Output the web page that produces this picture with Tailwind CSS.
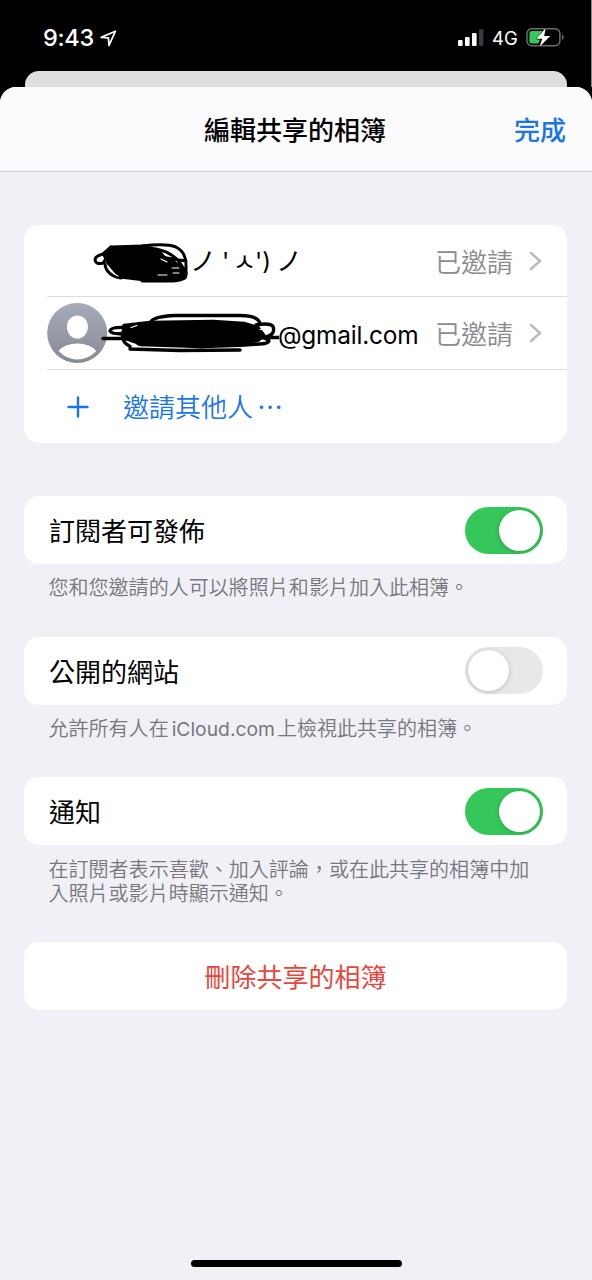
<!DOCTYPE html>
<html lang="zh-Hant">
<head>
<meta charset="utf-8">
<title>編輯共享的相簿</title>
<script src="https://cdn.jsdelivr.net/npm/@tailwindcss/browser@4"></script>
</head>
<body class="bg-black">
<div class="relative flex h-[1280px] w-[592px] flex-col overflow-hidden bg-black font-['Inter','Noto_Sans_CJK_TC',sans-serif]">
  <!-- status bar -->
  <div class="flex h-[71px] shrink-0 items-start justify-between border-r border-[#8a8a8a] pr-[27px] pl-[43px] text-white">
    <div class="flex items-center gap-[5px] pt-[23px]">
      <span class="w-[52px] text-[23.500px] leading-[30px] font-[550] tracking-[-0.300px]">9:43</span>
      <svg class="h-[17px] w-[17px]" viewBox="0 0 17 17" fill="none" stroke="#fff" stroke-width="1.700" stroke-linejoin="round"><path d="M1.200 7.400 15.400 1.200 9 15.400 8.400 7.800Z"/></svg>
    </div>
    <div class="flex items-center pt-[22px]">
      <svg class="h-[18px] w-[27px]" viewBox="0 0 27 18"><rect x="1" y="10.900" width="4.600" height="6" rx="1" fill="#fff"/><rect x="8" y="8.100" width="4.600" height="8.800" rx="1" fill="#fff"/><rect x="15" y="4.100" width="4.600" height="12.800" rx="1" fill="#fff"/><rect x="22" y="0.200" width="4.400" height="16.700" rx="1" fill="#3a3a3a"/></svg>
      <span class="ml-[8px] w-[26px] text-[18.500px] leading-[32px] font-normal">4G</span>
      <svg class="ml-[8px] h-[20px] w-[38px]" viewBox="0 0 38 20"><rect x="0.900" y="0.700" width="33" height="17" rx="5" fill="none" stroke="#6c6c6c" stroke-width="1.500"/><path d="M6 3.100h11L11 11.500h3l-1.500 4H6a2.600 2.600 0 0 1-2.600-2.600V5.700A2.600 2.600 0 0 1 6 3.100Z" fill="#35c759"/><path d="M36 6.500v5.600q1.700-.8 1.700-2.800T36 6.500Z" fill="#6c6c6c"/><path d="M19.800 0 10.400 10.700h5.800l-2.600 8L24.200 8h-6.100Z" fill="#fff" stroke="#000" stroke-width="0.800" paint-order="stroke"/></svg>
    </div>
  </div>
  <!-- sheet behind -->
  <div class="h-[16px] shrink-0 border-r border-[#8a8a8a] pr-[24px] pl-[25px]"><div class="h-full rounded-t-[14px] bg-[#dededf]"></div></div>
  <!-- active sheet -->
  <div class="flex flex-1 flex-col overflow-hidden rounded-t-[16px] bg-[#f1f0f6]">
    <header class="grid h-[85px] shrink-0 grid-cols-[1fr_auto_1fr] items-center border-b border-[#cfcfd4] bg-[#fbfbfe] pt-[3px] pr-[26px] pl-[24px]">
      <span></span>
      <h1 class="text-[26px] leading-[36px] font-medium text-black">編輯共享的相簿</h1>
      <span class="text-right text-[26px] leading-[36px] font-medium text-[#1a75e8]">完成</span>
    </header>

    <main class="flex flex-col pt-[52.500px] pr-[25px] pl-[24px]">
      <section class="flex h-[218px] flex-col rounded-[15px] bg-white pl-[23px]">
        <div class="flex h-[72.500px] items-center border-b border-[#dcdce0] pt-[2px] pr-[25px]">
          <svg class="ml-[43px] h-[50px] w-[100px] shrink-0" viewBox="90 237 100 50" fill="none" stroke="#000" stroke-width="3" stroke-linecap="round" stroke-linejoin="round"><path d="M111 248 144 247 158 251 164 258 176 268 178 272 186 274 185 279 170 281 145 281 120 278 108 264 104 256Z" fill="#000"/><path d="M111 248 103 255Q95 257 95 261Q96 266 103 264L107 258M105 265Q106 276 121 279M142 247Q166 244 176 248Q186 253 186 266V276Q185 282 170 282H142M156 250Q176 254 183 269M154 257 186 262M160 264 185 272M170 260 186 272"/><path d="M161 260 167 263M172 269H179M158 276H167M173 274H179M108 268Q111 274 118 277M170 252 179 259" stroke="#fff" stroke-width="1.100"/></svg>
          <div class="flex h-[36px] items-center pt-[2px] text-[24px] leading-[36px] text-black">
            <span class="w-[32px] text-[26px]">ノ</span><span class="w-[11px]">'</span><span class="w-[22px] text-center text-[25px]">ㅅ</span><span class="w-[21px]">')</span><span class="text-[26px]">ノ</span>
          </div>
          <span class="mt-[3px] ml-auto text-[26px] leading-[36px] font-[350] text-[#8b8b8f]">已邀請</span>
          <svg class="ml-[16px] h-[20px] w-[13px]" viewBox="0 0 13 20" fill="none" stroke="#bdbdc1" stroke-width="2.600" stroke-linecap="round" stroke-linejoin="round"><path d="M2 2 11 10 2 18"/></svg>
        </div>
        <div class="flex h-[73px] items-center border-b border-[#dcdce0] pt-px pr-[25px]">
          <svg class="h-[62px] w-[60px] shrink-0" viewBox="0 0 60 62"><defs><linearGradient id="a" x1="0" y1="0" x2="0" y2="1"><stop offset="0" stop-color="#a5abb9"/><stop offset="1" stop-color="#878b94"/></linearGradient></defs><circle cx="30.200" cy="31" r="30" fill="url(#a)"/><ellipse cx="30.400" cy="25" rx="10.500" ry="11.500" fill="#fff"/><path d="M11.500 49 Q18 41.500 30.400 41.500 T49.300 49 Q41 57.500 30.400 57.500 T11.500 49Z" fill="#fff"/></svg>
          <svg class="-ml-[6px] h-[50px] w-[178px] shrink-0" viewBox="101 308.500 178 50" fill="none" stroke="#000" stroke-width="3.400" stroke-linecap="round" stroke-linejoin="round"><path d="M124 326 150 323 213 322 244 324 258 328 264 336 258 341 240 344 200 347 140 345 123 338Z" fill="#000"/><path d="M103 339H122M126 328Q111 327 110 331.500Q112 335 124 334M151 322Q154 317 175 316H240Q258 316 260 324M130 349.500 180 351 240 350.500M256 325.500Q270 323 273 327Q276 335 265 338M262 338Q274 341 265 344Q245 346 200 347M255 338H280M124 330Q119 341 130 347"/><path d="M260 330 266 329M131 328 137 326M127 342 136 345" stroke="#fff" stroke-width="1.200"/></svg>
          <span class="mt-[3px] -ml-[1px] text-[24.400px] leading-[36px] tracking-[-0.200px] text-black">@gmail.com</span>
          <span class="mt-[3px] ml-auto text-[26px] leading-[36px] font-[350] text-[#8b8b8f]">已邀請</span>
          <svg class="ml-[16px] h-[20px] w-[13px]" viewBox="0 0 13 20" fill="none" stroke="#bdbdc1" stroke-width="2.600" stroke-linecap="round" stroke-linejoin="round"><path d="M2 2 11 10 2 18"/></svg>
        </div>
        <div class="flex h-[73px] items-center pt-px text-[#1a75e8]">
          <svg class="ml-[20px] h-[22px] w-[22px]" viewBox="0 0 22 22" stroke="currentColor" stroke-width="2.400" stroke-linecap="round"><path d="M1.500 11H20.500M11 1.500V20.500"/></svg>
          <span class="mt-[2px] ml-[34px] text-[26px] leading-[36px] font-[350]">邀請其他人</span><span class="-mt-px ml-[4px] font-['Noto_Sans_CJK_TC'] text-[26px] leading-[36px] font-normal">…</span>
        </div>
      </section>

      <section class="mt-[53.500px] flex h-[68px] items-center justify-between rounded-[15px] bg-white pr-[24px] pl-[25px]">
        <span class="mt-[4px] text-[26px] leading-[36px] text-black">訂閱者可發佈</span>
        <span class="flex h-[47px] w-[78px] justify-end rounded-full bg-[#35c759] p-[3px]"><span class="size-[41px] rounded-full bg-white shadow-[0_1px_5px_rgba(0,0,0,0.2)]"></span></span>
      </section>
      <p class="mt-[12px] pl-[24.500px] text-[20.050px] leading-[24px] font-[350] text-[#77777c]">您和您邀請的人可以將照片和影片加入此相簿。</p>

      <section class="mt-[36.500px] flex h-[68px] items-center justify-between rounded-[15px] bg-white pr-[24px] pl-[25px]">
        <span class="mt-[4px] text-[26px] leading-[36px] text-black">公開的網站</span>
        <span class="flex h-[47px] w-[78px] justify-start rounded-full bg-[#e8e8ea] p-[3px]"><span class="size-[41px] rounded-full bg-white shadow-[0_1px_5px_rgba(0,0,0,0.2)]"></span></span>
      </section>
      <p class="mt-[12px] pl-[24.500px] text-[20.050px] leading-[24px] font-[350] text-[#77777c]">允許所有人在<span class="mr-[2px] ml-[3px] text-[19.300px] font-normal">iCloud.com</span>上檢視此共享的相簿。</p>

      <section class="mt-[36.500px] flex h-[68px] items-center justify-between rounded-[15px] bg-white pr-[24px] pl-[25px]">
        <span class="mt-[4px] text-[26px] leading-[36px] text-black">通知</span>
        <span class="flex h-[47px] w-[78px] justify-end rounded-full bg-[#35c759] p-[3px]"><span class="size-[41px] rounded-full bg-white shadow-[0_1px_5px_rgba(0,0,0,0.2)]"></span></span>
      </section>
      <p class="mt-[12.500px] pl-[24.500px] text-[20.050px] leading-[24px] font-[350] text-[#77777c]">在訂閱者表示喜歡、加入評論，或在此共享的相簿中加<br>入照片或影片時顯示通知。</p>

      <section class="mt-[36.500px] flex h-[68px] items-center justify-center rounded-[15px] bg-white pt-[3px] text-[26px] leading-[36px] text-[#e8463c]">刪除共享的相簿</section>
    </main>
    <div class="mx-auto mt-auto mb-[13px] h-[7px] w-[211px] shrink-0 rounded-full bg-black"></div>
  </div>
</div>
</body>
</html>
